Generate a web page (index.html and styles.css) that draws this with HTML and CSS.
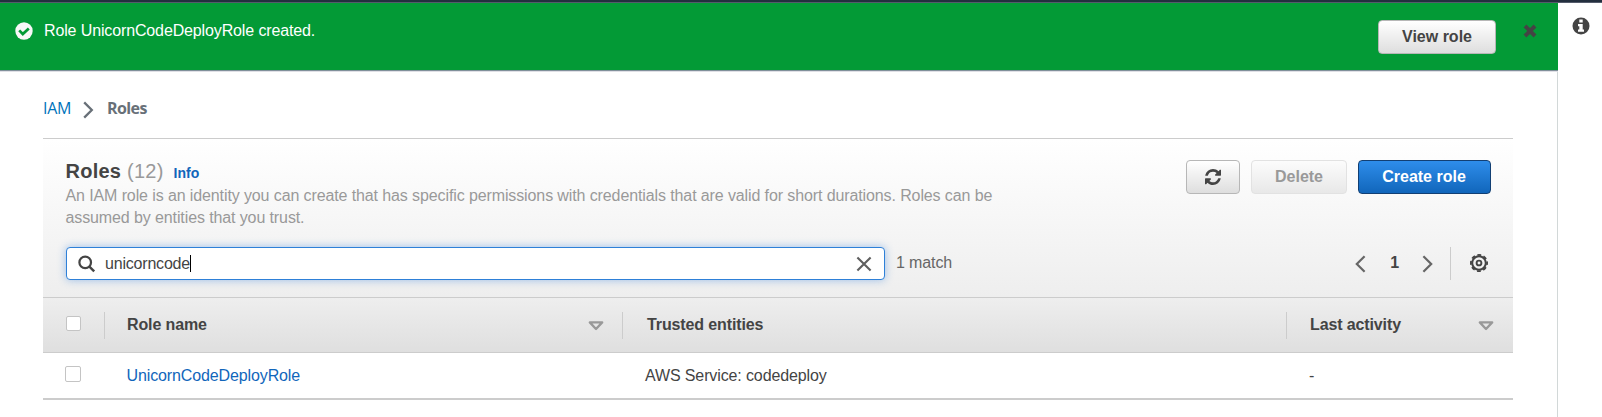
FILE: index.html
```html
<!DOCTYPE html>
<html lang="en">
<head>
<meta charset="utf-8">
<title>IAM Roles</title>
<link rel="stylesheet" href="styles.css">
</head>
<body>
<div class="topbar"></div>
<div class="shell">
  <main class="main">
    <div class="flash">
      <svg class="flash-icon" width="18" height="18" viewBox="0 0 18 18"><circle cx="9" cy="9" r="8.7" fill="#f8f8f8"/><path d="M4.2 8.4 L7.8 12 L13.8 6.4" fill="none" stroke="#039a36" stroke-width="2.7"/></svg>
      <span class="flash-text">Role UnicornCodeDeployRole created.</span>
      <button class="btn btn-view">View role</button>
      <svg class="flash-close" width="14" height="14" viewBox="0 0 14 14"><path d="M2 2 L12 12 M12 2 L2 12" fill="none" stroke="#444" stroke-width="4"/></svg>
    </div>
    <nav class="crumbs">
      <a class="crumb-link">IAM</a>
      <svg class="crumb-sep" width="11" height="18" viewBox="0 0 11 18"><path d="M1.2 1.4 L8.8 9 L1.2 16.6" fill="none" stroke="#687078" stroke-width="2.3"/></svg>
      <span class="crumb-current">Roles</span>
    </nav>
    <section class="panel">
      <header class="panel-head">
        <div class="title-row">
          <div class="titles">
            <h1 class="title">Roles <span class="count">(12)</span><a class="info">Info</a></h1>
            <p class="desc">An IAM role is an identity you can create that has specific permissions with credentials that are valid for short durations. Roles can be<br>assumed by entities that you trust.</p>
          </div>
          <div class="actions">
            <button class="btn btn-refresh"><svg width="16" height="16" viewBox="0 0 1536 1536"><path fill="#444" d="M1511 928q0 5-1 7-64 268-268 434.500T764 1536q-146 0-282.500-55T238 1324l-129 129q-19 19-45 19t-45-19-19-45V960q0-26 19-45t45-19h448q26 0 45 19t19 45-19 45l-137 137q71 66 161 102t187 36q134 0 250-65t186-179q11-17 53-117 8-23 30-23h192q13 0 22.500 9.500t9.500 22.500zm25-800v448q0 26-19 45t-45 19h-448q-26 0-45-19t-19-45 19-45l138-138Q969 256 768 256q-134 0-250 65T332 500q-11 17-53 117-8 23-30 23H50q-13 0-22.500-9.500T18 608v-7q65-268 270-434.500T768 0q146 0 284 55.500T1297 212l130-129q19-19 45-19t45 19 19 45z"/></svg></button>
            <button class="btn btn-disabled">Delete</button>
            <button class="btn btn-primary">Create role</button>
          </div>
        </div>
        <div class="filter-row">
          <div class="search">
            <svg class="search-icon" width="18" height="18" viewBox="0 0 18 18"><circle cx="7.2" cy="7.4" r="5.8" fill="none" stroke="#444" stroke-width="2.2"/><path d="M11.4 11.6 L16.2 16.4" fill="none" stroke="#444" stroke-width="2.4"/></svg>
            <span class="query">unicorncode</span><span class="caret"></span>
            <svg class="clear" width="16" height="16" viewBox="0 0 16 16"><path d="M1.4 1.4 L14.6 14.6 M14.6 1.4 L1.4 14.6" fill="none" stroke="#5f5f5f" stroke-width="2.1"/></svg>
          </div>
          <span class="matches">1 match</span>
          <div class="pager">
            <svg width="11" height="18" viewBox="0 0 11 18"><path d="M9.6 1.2 L1.8 9 L9.6 16.8" fill="none" stroke="#666" stroke-width="2.2"/></svg>
            <span class="page">1</span>
            <svg width="11" height="18" viewBox="0 0 11 18"><path d="M1.4 1.2 L9.2 9 L1.4 16.8" fill="none" stroke="#666" stroke-width="2.2"/></svg>
            <span class="pager-line"></span>
            <svg class="gear" width="18" height="18" viewBox="0 0 18 18"><g fill="none" stroke="#444"><circle cx="9" cy="9" r="6.8" stroke-width="2"/><circle cx="9" cy="9" r="8.1" stroke-width="1.8" stroke-dasharray="3.8 2.562" stroke-dashoffset="1.9"/><circle cx="9" cy="9" r="2.4" stroke-width="1.9"/></g></svg>
          </div>
        </div>
      </header>
      <div class="grid grid-head">
        <div class="cell"><span class="box box-head"></span></div>
        <div class="cell cell-split">Role name<svg class="sort" width="16" height="10" viewBox="0 0 16 10"><path d="M1.8 1.4 H14.2 L8 8 Z" fill="none" stroke="#999" stroke-width="2.3" stroke-linejoin="round"/></svg></div>
        <div class="cell cell-split cell-wide">Trusted entities</div>
        <div class="cell cell-split cell-last">Last activity<svg class="sort" width="16" height="10" viewBox="0 0 16 10"><path d="M1.8 1.4 H14.2 L8 8 Z" fill="none" stroke="#999" stroke-width="2.3" stroke-linejoin="round"/></svg></div>
      </div>
      <div class="grid grid-row">
        <div class="cell"><span class="box"></span></div>
        <div class="cell cell-text"><a class="role-link">UnicornCodeDeployRole</a></div>
        <div class="cell cell-text">AWS Service: codedeploy</div>
        <div class="cell cell-text">-</div>
      </div>
    </section>
  </main>
  <aside class="side">
    <svg width="18" height="18" viewBox="0 0 18 18"><circle cx="9" cy="9" r="8.5" fill="#444"/><path d="M7.3 2.6 H10.7 V5.4 H7.3 Z M6 7 H10.7 V12.6 H12 V14.8 H6 V12.6 H7.3 V9.2 H6 Z" fill="#fff"/></svg>
  </aside>
</div>
</body>
</html>
```
FILE: styles.css
```css
* { box-sizing: border-box; }
body {
  margin: 0;
  height: 417px;
  overflow: hidden;
  background: #fff;
  color: #444;
  font: 16px/22px "Liberation Sans", Arial, sans-serif;
  letter-spacing: -.12px;
}
svg { display: block; flex: none; }
.topbar { height: 3px; background: #232f3e; border-bottom: 1px solid #545b6b; }
.shell { display: flex; height: 414px; }
.main { width: 1558px; border-right: 1px solid #d2d8d8; }
.side { flex: 1; padding: 14px 0 0 14px; }

.flash {
  display: flex;
  align-items: flex-start;
  width: 1558px;
  height: 69px;
  padding: 17px 21px 0 15px;
  background: #039a36;
  border-bottom: 1px solid #e0e0e6;
  box-shadow: inset 0 -1px #80909a;
  color: #fff;
}
.flash-icon { margin-top: 2px; }
.flash-text { flex: 1; margin: 0 0 0 11px; letter-spacing: -.13px; }
.flash-close { margin: 4px 0 0 27px; }

.btn {
  display: flex;
  align-items: center;
  justify-content: center;
  height: 34px;
  padding: 0;
  border: 1px solid #b7b7b7;
  border-radius: 4px;
  background: linear-gradient(#fff, #dedede);
  color: #444;
  font: bold 16px/22px "Liberation Sans", Arial, sans-serif;
}
.btn-view { width: 118px; }
.btn-refresh { width: 54px; }
.btn-disabled { width: 96px; border-color: #e2e2e2; background: linear-gradient(#fcfcfc, #e8e8e8); color: #999; }
.btn-primary { width: 133px; padding-right: 1px; border-color: #123f73; background: linear-gradient(#2e8deb, #1166bb); color: #fff; }

.crumbs {
  display: flex;
  align-items: center;
  height: 66px;
  padding: 6px 0 0 43px;
  font-family: "Open Sans", "Noto Sans", sans-serif;
}
.crumb-link { width: 40px; color: #0073bb; letter-spacing: -.3px; }
.crumb-sep { margin-top: 3px; }
.crumb-current { margin-left: 13px; color: #687078; font-weight: 700; letter-spacing: -.6px; }

.panel { width: 1470px; margin-left: 43px; border-top: 1px solid #ccc; border-bottom: 2px solid #ccc; }
.panel-head { height: 158px; padding: 21px 22px 0 23px; background: linear-gradient(#fff, #eee); }
.title-row { display: flex; justify-content: space-between; height: 87px; }
.titles { margin: -1px 0 0 -.5px; }
.title { margin: 0; font-size: 20px; line-height: 24px; letter-spacing: .25px; }
.count { color: #999; font-weight: 400; }
.info { margin-left: 10px; color: #1166bb; font-size: 14px; letter-spacing: 0; }
.desc { margin: 0; color: #999; white-space: nowrap; letter-spacing: -.11px; }
.actions { display: flex; gap: 11px; }
.filter-row { display: flex; align-items: center; height: 33px; }
.search {
  display: flex;
  align-items: center;
  width: 819px;
  height: 33px;
  padding: 0 12px 0 11px;
  border: 1px solid #2e80d8;
  border-radius: 4px;
  background: #fff;
  box-shadow: 0 0 8px rgba(46, 125, 220, .45);
}
.query { margin-left: 9px; letter-spacing: -.2px; }
.caret { width: 1px; height: 17px; background: #000; }
.clear { margin-left: auto; }
.matches { margin: -1px 0 0 11px; color: #666; }
.pager { display: flex; align-items: center; margin-left: auto; padding-right: 3px; }
.page { margin: -1px 23px 0 24px; font-weight: 700; }
.pager-line { width: 1px; height: 33px; margin: 0 19px 0 17px; background: #ccc; }
.gear { margin-top: -1px; }

.grid { display: grid; grid-template-columns: 61px 518px 664px 227px; }
.grid-head {
  height: 56px;
  border-top: 1px solid #ccc;
  border-bottom: 1px solid #ccc;
  background: linear-gradient(#eee, #dfdfdf);
  font-weight: 700;
}
.grid-row { height: 45px; }
.cell { display: flex; align-items: center; padding-left: 22px; }
.cell-split { height: 27px; align-self: start; margin-top: 14px; padding: 0 18px 1px 22px; border-left: 1px solid #ccc; }
.cell-wide { padding-left: 24px; }
.cell-last { padding-left: 23px; padding-right: 19px; }
.cell-text { padding: 1px 0 0 22.5px; }
.cell-text + .cell-text { padding-left: 23px; }
.sort { margin: 1px 0 0 auto; }
.box { width: 16px; height: 16px; border: 1px solid #c4c4c4; border-radius: 2px; background: #fff; margin-bottom: 3px; }
.box-head { width: 15px; height: 15px; margin: 0 0 3px 1px; }
.role-link { color: #1166bb; }
```
